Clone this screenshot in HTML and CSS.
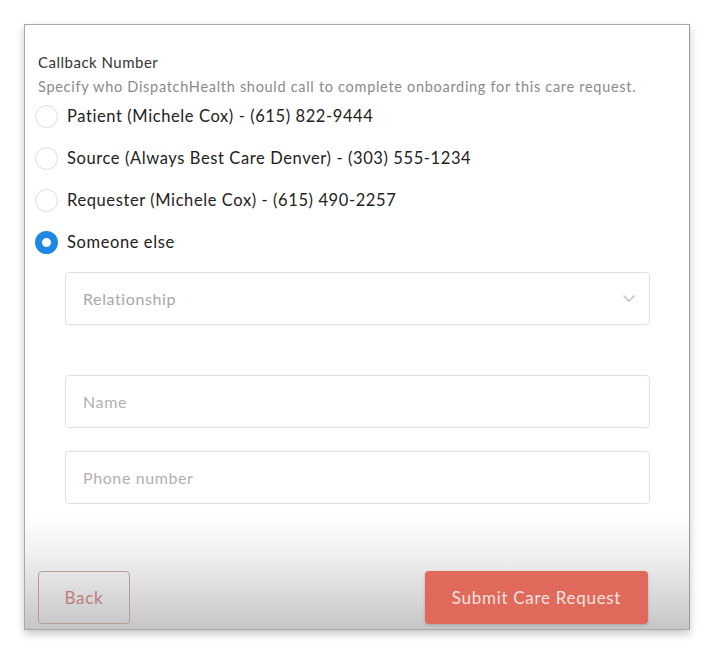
FILE: index.html
```html
<!DOCTYPE html>
<html lang="en">
<head>
    <meta charset="UTF-8">
    <meta name="viewport" content="width=device-width, initial-scale=1.0">
    <title>Callback Number</title>
    <link rel="stylesheet" href="styles.css">
</head>
<body>
    <div class="card">
        <!-- 제목 -->
        <h2 class="ttl">Callback Number</h2>
        <p class="desc">Specify who DispatchHealth should call to complete onboarding for this care request.</p>

        <!-- 라디오 목록 -->
        <ul class="opts">
            <li class="opt"><span class="rd"></span>Patient (Michele Cox) - (615) 822-9444</li>
            <li class="opt"><span class="rd"></span>Source (Always Best Care Denver) - (303) 555-1234</li>
            <li class="opt"><span class="rd"></span>Requester (Michele Cox) - (615) 490-2257</li>
            <li class="opt"><span class="rd on"></span>Someone else</li>
        </ul>

        <!-- 입력 영역 -->
        <div class="fields">
            <div class="fld sel">
                <span class="ph">Relationship</span>
                <svg class="chev" width="14" height="9" viewBox="0 0 14 9">
                    <path d="M1.5 1.5 L7 7 L12.5 1.5" fill="none" stroke="#c4c4c4" stroke-width="1.6"/>
                </svg>
            </div>
            <input class="fld name" type="text" placeholder="Name">
            <input class="fld phone" type="text" placeholder="Phone number">
        </div>

        <!-- 하단 버튼 -->
        <div class="foot">
            <button class="btn back">Back</button>
            <button class="btn submit">Submit Care Request</button>
        </div>
    </div>
</body>
</html>
```

FILE: styles.css
```css
/* 초기화 */
html, body{
    margin: 0;
    padding: 0;
}
body{
    padding: 24px;
    background: #fff;
    font-family: Lato, "Noto Sans", sans-serif;
}

/* 카드 */
.card{
    box-sizing: border-box;
    width: 666px;
    height: 606px;
    padding: 27px 39px 0 13px;
    border: 1px solid #a8a8a8;
    border-right-color: #999;
    background: linear-gradient(to bottom, #fff 0, #fff 490px, #f0f0f0 530px, #c6c6c6 100%);
    box-shadow: 0 4px 8px rgba(0,0,0,.22);
}

.ttl{
    margin: 0;
    font-size: 15px;
    font-weight: normal;
    line-height: 20px;
    letter-spacing: .5px;
    color: #333;
}
.desc{
    margin: 7px 0 0;
    font-size: 14.5px;
    line-height: 16px;
    letter-spacing: .7px;
    color: #8a8a8a;
}

/* 라디오 */
.opts{
    margin: 0;
    padding: 0;
    list-style: none;
}
.opt{
    display: flex;
    align-items: center;
    height: 42px;
    margin-left: -3px;
    font-size: 16.5px;
    letter-spacing: .6px;
    color: #222;
}
.rd{
    box-sizing: border-box;
    flex: none;
    width: 23px;
    height: 23px;
    margin-right: 9px;
    border: 1.5px solid #dcdcdc;
    border-radius: 50%;
}
.rd.on{
    border: 7.5px solid #1e88e5;
    background: #fff;
}

/* 입력창 */
.fields{
    margin: 9px 0 0 27px;
}
.fld{
    box-sizing: border-box;
    display: flex;
    align-items: center;
    width: 100%;
    height: 53px;
    padding: 0 17px;
    border: 1px solid #e0e0e0;
    border-radius: 4px;
    background: #fff;
    font-family: inherit;
    font-size: 16px;
    letter-spacing: .6px;
    color: #333;
    outline: none;
}
.fld::placeholder{
    color: #b0b0b0;
}
.sel{
    justify-content: space-between;
    padding-right: 13px;
}
.ph{
    color: #a8a8a8;
}
.name{
    margin-top: 50px;
}
.phone{
    margin-top: 23px;
}

/* 버튼 */
.foot{
    display: flex;
    justify-content: space-between;
    margin-top: 67px;
    padding-right: 2px;
}
.btn{
    height: 53px;
    border-radius: 4px;
    font-family: inherit;
    font-size: 17px;
    letter-spacing: .7px;
}
.back{
    width: 92px;
    border: 1.5px solid #b79a9a;
    background: transparent;
    color: #c07c7c;
}
.submit{
    width: 223px;
    border: none;
    background: #df6a5c;
    color: #f6e2df;
    box-shadow: 0 1px 3px rgba(0,0,0,.2);
}
```
